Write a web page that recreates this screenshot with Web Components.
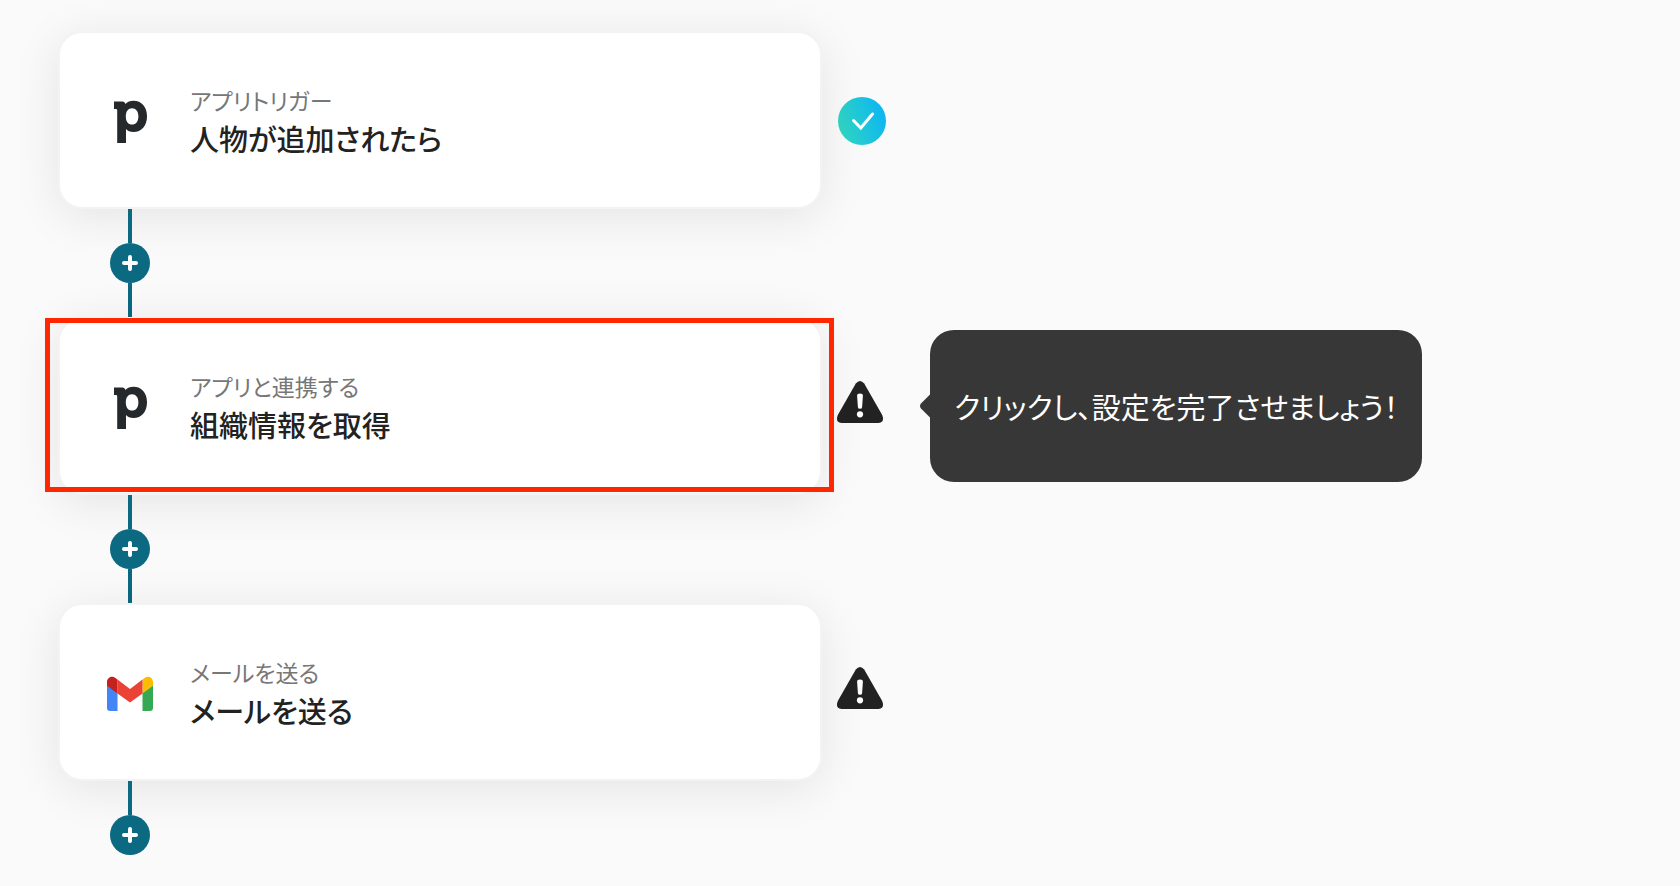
<!DOCTYPE html>
<html lang="ja">
<head>
<meta charset="utf-8">
<meta name="viewport" content="width=device-width, initial-scale=1">
<title>フロー</title>
<style>
  body {
    margin: 0;
    background: #fafafa;
    color: #222;
    font-family: "Noto Sans CJK JP", sans-serif;
    font-feature-settings: "palt";
  }
</style>
</head>
<body>
<flow-board>
  <flow-step>
    <app-icon slot="icon" name="pipedrive"></app-icon>
    <span slot="kind">アプリトリガー</span>
    <span slot="name">人物が追加されたら</span>
    <step-status slot="status" state="done"></step-status>
  </flow-step>
  <flow-connector></flow-connector>
  <flow-step highlight>
    <app-icon slot="icon" name="pipedrive"></app-icon>
    <span slot="kind">アプリと連携する</span>
    <span slot="name">組織情報を取得</span>
    <step-status slot="status" state="warning"></step-status>
    <flow-tip slot="tip">クリックし、設定を完了させましょう！</flow-tip>
  </flow-step>
  <flow-connector></flow-connector>
  <flow-step>
    <app-icon slot="icon" name="gmail"></app-icon>
    <span slot="kind">メールを送る</span>
    <span slot="name">メールを送る</span>
    <step-status slot="status" state="warning"></step-status>
  </flow-step>
  <flow-connector end></flow-connector>
</flow-board>

<script>
"use strict";

const template = (html) => {
  const t = document.createElement('template');
  t.innerHTML = html;
  return t;
};

class BaseElement extends HTMLElement {
  constructor() {
    super();
    this.attachShadow({ mode: 'open' });
    this.shadowRoot.appendChild(this.constructor.template.content.cloneNode(true));
  }
}

class FlowBoard extends BaseElement {
  static template = template(`
    <style>
      :host { display: block; }
      main {
        display: flex;
        flex-direction: column;
        padding: 31px 58px;
      }
    </style>
    <main><slot></slot></main>
  `);
}

class FlowStep extends BaseElement {
  static template = template(`
    <style>
      :host {
        display: flex;
        align-items: center;
      }
      .wrap {
        position: relative;
        flex: 0 1 764px;
        min-width: 0;
      }
      button {
        display: flex;
        align-items: center;
        gap: 36px;
        box-sizing: border-box;
        width: 100%;
        min-height: 178px;
        padding: 48px 46px;
        border: 2px solid #f3f3f3;
        border-radius: 24px;
        background: #fff;
        box-shadow: 0 8px 48px rgba(0, 0, 0, .09);
        color: inherit;
        font: inherit;
        font-feature-settings: inherit;
        text-align: left;
        cursor: pointer;
      }
      .text {
        display: flex;
        flex-direction: column;
      }
      .kind { color: #777; font-size: 23px; line-height: 36px; }
      .name { font-size: 29px; font-weight: 500; line-height: 40px; }
      .status { display: flex; margin-left: 14px; }
      .tip { display: flex; margin-left: 44px; }
      /* marker frame drawn over the card */
      .frame { display: none; }
      :host([highlight]) .frame {
        display: block;
        position: absolute;
        inset: 1px -12px 3px -13px;
        border: 5px solid #ff2600;
        pointer-events: none;
      }
    </style>
    <div class="wrap">
      <button type="button">
        <slot name="icon"></slot>
        <span class="text">
          <span class="kind"><slot name="kind"></slot></span>
          <span class="name"><slot name="name"></slot></span>
        </span>
      </button>
      <div class="frame"></div>
    </div>
    <div class="status"><slot name="status"></slot></div>
    <div class="tip"><slot name="tip"></slot></div>
  `);
}

class FlowConnector extends BaseElement {
  static template = template(`
    <style>
      :host {
        position: relative;
        display: flex;
        flex-direction: column;
        align-items: center;
        align-self: flex-start;
        width: 40px;
        margin-left: 52px;
      }
      .line { width: 4px; height: 34px; background: #0b6982; }
      :host([end]) .line:last-child { display: none; }
      button {
        display: flex;
        width: 40px;
        height: 40px;
        padding: 0;
        border: 0;
        border-radius: 50%;
        background: #0b6982;
        cursor: pointer;
      }
    </style>
    <div class="line"></div>
    <button type="button" aria-label="ステップを追加">
      <svg width="40" height="40" viewBox="0 0 40 40" fill="none" stroke="#fff" stroke-width="4" stroke-linecap="round">
        <path d="M14 20h12M20 14v12"/>
      </svg>
    </button>
    <div class="line"></div>
  `);
}

class FlowTip extends BaseElement {
  static template = template(`
    <style>
      :host {
        position: relative;
        display: block;
        padding: 57px 24px;
        border-radius: 24px;
        background: #373737;
        color: #fff;
        font-size: 29px;
        line-height: 38px;
      }
      svg {
        position: absolute;
        top: calc(50% - 12px);
        right: 100%;
      }
    </style>
    <svg width="10" height="24" viewBox="0 0 10 24" fill="#373737">
      <path d="M10 0.500L1 9.500Q-1 12 1 14.500L10 23.500z"/>
    </svg>
    <div role="tooltip"><slot></slot></div>
  `);
}

class IconElement extends HTMLElement {
  constructor() {
    super();
    this.attachShadow({ mode: 'open' });
  }
  connectedCallback() {
    const { key, size, icons } = this.constructor;
    this.shadowRoot.innerHTML = `
      <style>
        :host { display: block; flex: none; }
        svg { display: block; }
      </style>
      <svg width="${size}" height="${size}" viewBox="0 0 ${size} ${size}" aria-hidden="true">${icons[this.getAttribute(key)]}</svg>
    `;
  }
}

class AppIcon extends IconElement {
  static key = 'name';
  static size = 48;
  static icons = {
    pipedrive: `
      <path fill="#26292c" fill-rule="evenodd" d="M8 5.500H16.500C18 5.500 19 6.500 19.500 8C21.500 6 24 4.800 27.500 4.800C35.500 4.800 41 11 41 20.200C41 29.600 35.500 36 27.500 36C24 36 21.500 34.800 20 33V47H11.200V14.500C11.200 13.500 10.800 13 9.800 13H8zM26 12.200C22.300 12.200 19.800 15.300 19.800 20.400C19.800 25.500 22.300 28.500 26 28.500C29.800 28.500 32.400 25.500 32.400 20.400C32.400 15.300 29.800 12.200 26 12.200z"/>`,
    gmail: `
      <path fill="#4285f4" d="M1 17L11.500 24.500V43H4.200A3.200 3.200 0 0 1 1 39.800z"/>
      <path fill="#34a853" d="M47 17L36.500 24.500V43H43.800A3.200 3.200 0 0 0 47 39.800z"/>
      <path fill="#fbbc04" d="M36.500 11.500L38.600 9.900C42 7.300 47 9.600 47 14V17.700L36.500 25.400z"/>
      <path fill="#ea4335" d="M11.500 25.400V11.500L24 20.900L36.500 11.500V25.400L24 34.600z"/>
      <path fill="#c5221f" d="M1 17.700V14C1 9.600 6 7.300 9.400 9.900L11.500 11.500V25.400z"/>`
  };
}

class StepStatus extends IconElement {
  static key = 'state';
  static size = 50;
  static icons = {
    done: `
      <defs>
        <linearGradient id="g" x1="0" y1="0.650" x2="1" y2="0.350">
          <stop offset="0.050" stop-color="#2fd6c3"/>
          <stop offset="0.900" stop-color="#10b8ee"/>
        </linearGradient>
      </defs>
      <circle cx="26" cy="26" r="24" fill="url(#g)"/>
      <path d="M17.500 25.500L24.800 33L36.500 19" fill="none" stroke="#fff" stroke-width="3" stroke-linecap="round"/>`,
    warning: `
      <path fill="#222" d="M19.800 2.500Q24-2.500 28.200 2.500L46.200 34Q49 41 42.500 42H5.500Q-1 41 1.800 34z"/>
      <path fill="#fff" d="M21.100 14.800Q21.100 12.400 24 12.400T26.900 14.800L26.100 26.200Q26 27.700 24 27.700T21.900 26.200z"/>
      <circle cx="24" cy="33.300" r="3.100" fill="#fff"/>`
  };
}

customElements.define('flow-board', FlowBoard);
customElements.define('flow-step', FlowStep);
customElements.define('flow-connector', FlowConnector);
customElements.define('flow-tip', FlowTip);
customElements.define('app-icon', AppIcon);
customElements.define('step-status', StepStatus);
</script>
</body>
</html>
